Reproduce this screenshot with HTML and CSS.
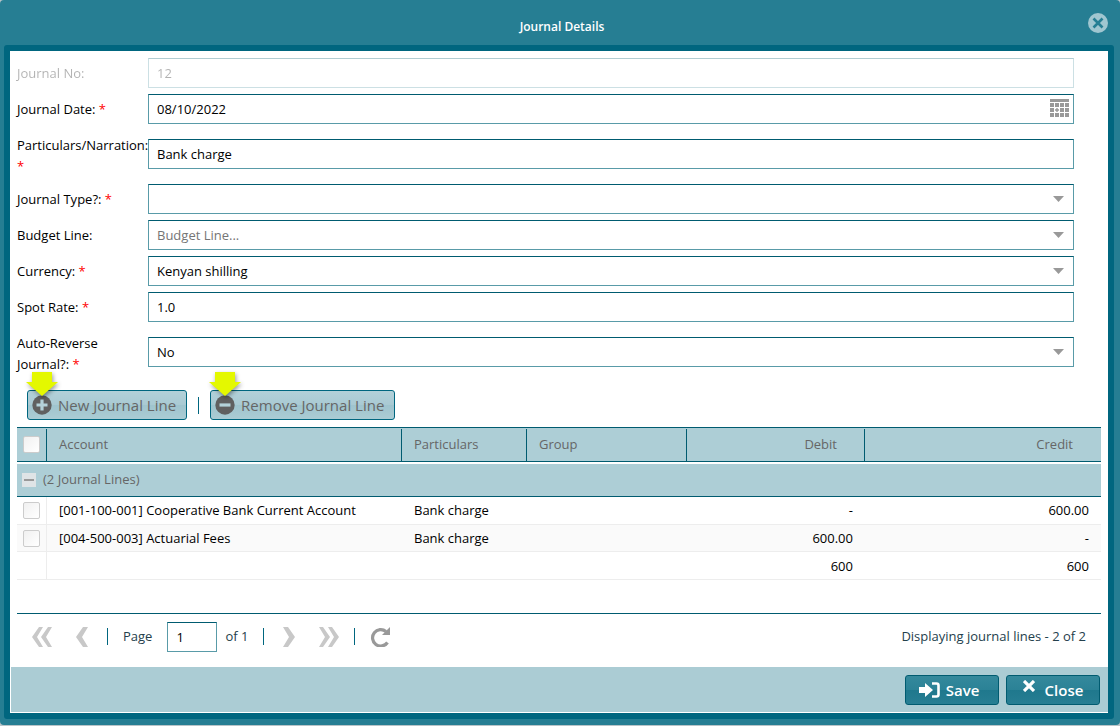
FILE: index.html
```html
<!DOCTYPE html>
<html lang="en">
<head>
    <meta charset="UTF-8">
    <meta name="viewport" content="width=device-width, initial-scale=1.0">
    <title>Journal Details</title>
    <link rel="stylesheet" href="styles.css">
</head>
<body>
    <div class="window">
        <header class="window-header">
            <h1>Journal Details</h1>
            <button type="button" class="window-close" aria-label="Close window">
                <svg width="20" height="20" viewBox="0 0 20 20">
                    <circle cx="10" cy="10" r="10" fill="#a0c6d0"/>
                    <path d="M5.5 5.5l9 9M14.5 5.5l-9 9" stroke="#267e93" stroke-width="2.6"/>
                </svg>
            </button>
        </header>

        <main class="window-body">
            <form class="journal-form">
                <div class="field field-disabled">
                    <label for="journalNo">Journal No:</label>
                    <input type="text" id="journalNo" class="control" value="12" disabled>
                </div>
                <div class="field">
                    <label for="journalDate">Journal Date: <span class="required">*</span></label>
                    <div class="date-box">
                        <input type="text" id="journalDate" class="control" value="08/10/2022">
                        <button type="button" class="date-trigger" aria-label="Pick a date">
                            <svg width="20" height="18" viewBox="0 0 20 18" fill="#999">
                                <path d="M0 0h19v3H0zM0 4h4v4H0zM5 4h4v4H5zM10 4h4v4h-4zM15 4h4v4h-4zM0 9h4v4H0zM6.300 9h1.400v1.300H9v1.400H7.700V13H6.300v-1.300H5v-1.400h1.300zM10 9h4v4h-4zM15 9h4v4h-4zM0 14h4v4H0zM5 14h4v4H5zM10 14h4v4h-4zM15 14h4v4h-4z"/>
                            </svg>
                        </button>
                    </div>
                </div>
                <div class="field">
                    <label for="narration">Particulars/Narration: <span class="required">*</span></label>
                    <input type="text" id="narration" class="control" value="Bank charge">
                </div>
                <div class="field">
                    <label for="journalType">Journal Type?: <span class="required">*</span></label>
                    <select id="journalType" class="control">
                        <option></option>
                    </select>
                </div>
                <div class="field">
                    <label for="budgetLine">Budget Line:</label>
                    <select id="budgetLine" class="control control-empty">
                        <option>Budget Line...</option>
                    </select>
                </div>
                <div class="field">
                    <label for="currency">Currency: <span class="required">*</span></label>
                    <select id="currency" class="control">
                        <option>Kenyan shilling</option>
                    </select>
                </div>
                <div class="field">
                    <label for="spotRate">Spot Rate: <span class="required">*</span></label>
                    <input type="text" id="spotRate" class="control" value="1.0">
                </div>
                <div class="field">
                    <label for="autoReverse">Auto-Reverse Journal?: <span class="required">*</span></label>
                    <select id="autoReverse" class="control">
                        <option>No</option>
                    </select>
                </div>
            </form>

            <section class="lines">
                <div class="toolbar">
                    <button type="button" class="btn btn-light">
                        <svg width="20" height="20" viewBox="0 0 20 20">
                            <circle cx="10" cy="10" r="9.700" fill="#606060"/>
                            <path d="M10 4.500v11M4.500 10h11" stroke="#b4d2d9" stroke-width="3.200"/>
                        </svg>
                        New Journal Line
                        <svg class="pointer" width="38" height="32" viewBox="0 0 38 32">
                            <path d="M9 3h20v10h6L19 27 3 13h6z" fill="#e4f800"/>
                        </svg>
                    </button>
                    <span class="separator"></span>
                    <button type="button" class="btn btn-light">
                        <svg width="20" height="20" viewBox="0 0 20 20">
                            <circle cx="10" cy="10" r="9.700" fill="#606060"/>
                            <path d="M4.500 10h11" stroke="#b4d2d9" stroke-width="3.200"/>
                        </svg>
                        Remove Journal Line
                        <svg class="pointer" width="38" height="32" viewBox="0 0 38 32">
                            <path d="M9 3h20v10h6L19 27 3 13h6z" fill="#e4f800"/>
                        </svg>
                    </button>
                </div>

                <table class="grid">
                    <colgroup>
                        <col class="col-check">
                        <col>
                        <col class="col-particulars">
                        <col class="col-group">
                        <col class="col-debit">
                        <col class="col-credit">
                    </colgroup>
                    <thead>
                        <tr>
                            <th class="check"><input type="checkbox" aria-label="Select all lines"></th>
                            <th>Account</th>
                            <th>Particulars</th>
                            <th>Group</th>
                            <th class="amount">Debit</th>
                            <th class="amount">Credit</th>
                        </tr>
                    </thead>
                    <tbody>
                        <tr class="group-row">
                            <td colspan="6">
                                <button type="button" class="group-toggle" aria-label="Collapse group"></button>(2 Journal Lines)
                            </td>
                        </tr>
                        <tr class="first">
                            <td class="check"><input type="checkbox" aria-label="Select line 1"></td>
                            <td>[001-100-001] Cooperative Bank Current Account</td>
                            <td>Bank charge</td>
                            <td></td>
                            <td class="amount">-</td>
                            <td class="amount">600.00</td>
                        </tr>
                        <tr class="alt">
                            <td class="check"><input type="checkbox" aria-label="Select line 2"></td>
                            <td>[004-500-003] Actuarial Fees</td>
                            <td>Bank charge</td>
                            <td></td>
                            <td class="amount">600.00</td>
                            <td class="amount">-</td>
                        </tr>
                        <tr class="summary">
                            <td class="check"></td>
                            <td></td>
                            <td></td>
                            <td></td>
                            <td class="amount">600</td>
                            <td class="amount">600</td>
                        </tr>
                    </tbody>
                </table>

                <div class="paging">
                    <div class="page-group">
                        <button type="button" aria-label="First page">
                            <svg width="20" height="20" viewBox="0 0 20 20" fill="#c8c8c8">
                                <path d="M7 0h4L5 10l6 10H7L0 10zM16 0h4l-6 10 6 10h-4L9 10z"/>
                            </svg>
                        </button>
                        <button type="button" aria-label="Previous page">
                            <svg width="20" height="20" viewBox="0 0 20 20" fill="#c8c8c8">
                                <path d="M11 0h5l-6 10 6 10h-5L4 10z"/>
                            </svg>
                        </button>
                    </div>
                    <span class="separator"></span>
                    <label for="page">Page</label>
                    <input type="text" id="page" class="control page-input" value="1">
                    <span class="page-total">of 1</span>
                    <span class="separator"></span>
                    <div class="page-group">
                        <button type="button" aria-label="Next page">
                            <svg width="20" height="20" viewBox="0 0 20 20" fill="#c8c8c8">
                                <path d="M9 0H4l6 10-6 10h5l7-10z"/>
                            </svg>
                        </button>
                        <button type="button" aria-label="Last page">
                            <svg width="20" height="20" viewBox="0 0 20 20" fill="#c8c8c8">
                                <path d="M13 0H9l6 10-6 10h4l7-10zM4 0H0l6 10-6 10h4l7-10z"/>
                            </svg>
                        </button>
                    </div>
                    <span class="separator"></span>
                    <button type="button" aria-label="Refresh">
                        <svg width="20" height="20" viewBox="0 0 20 20">
                            <path d="M16 4.500A8.200 8.200 0 1 0 17.500 15.500" fill="none" stroke="#999" stroke-width="3.200"/>
                            <path d="M20 0v8h-8z" fill="#999"/>
                        </svg>
                    </button>
                    <span class="paging-info">Displaying journal lines - 2 of 2</span>
                </div>
            </section>

            <footer class="window-footer">
                <button type="button" class="btn btn-dark btn-save">
                    <svg width="21" height="16" viewBox="0 0 21 16">
                        <path d="M0 5h6V1l8 7-8 7v-4H0z" fill="#fff"/>
                        <path d="M13 1.500h4.500q2 0 2 2v9q0 2-2 2H13" fill="none" stroke="#fff" stroke-width="2.600"/>
                    </svg>
                    Save
                </button>
                <button type="button" class="btn btn-dark btn-close">
                    <svg width="12" height="12" viewBox="0 0 12 12">
                        <path d="M1 1l10 10M11 1L1 11" stroke="#fff" stroke-width="3.200"/>
                    </svg>
                    Close
                </button>
            </footer>
        </main>
    </div>
</body>
</html>
```
FILE: styles.css
```css
* {
    box-sizing: border-box;
}
body {
    margin: 0;
    background: #b9c4c8;
    color: #000;
    font: 13px/21px "Open Sans", sans-serif;
}
button,
input,
select {
    margin: 0;
    font: inherit;
    color: inherit;
}
button {
    padding: 0;
    border: 0;
    background: none;
}
svg {
    display: block;
    flex: none;
}

/* window frame */
.window {
    display: flex;
    flex-direction: column;
    min-height: calc(100vh - 1px);
    padding: 0 6px 6px 4px;
    background: #267e93;
    border-radius: 4px;
}
.window-header {
    display: flex;
    align-items: center;
    height: 45px;
    padding: 0 6px 0 32px;
}
.window-header h1 {
    flex: 1;
    margin: 0;
    padding-top: 8px;
    color: #fff;
    font-size: 12px;
    font-weight: 600;
    text-align: center;
}
.window-body {
    flex: 1;
    display: flex;
    flex-direction: column;
    border: 6px solid #00667f;
    border-radius: 3px;
    background: #fff;
}

/* form */
.journal-form {
    display: flex;
    flex-direction: column;
    gap: 6px;
    padding: 7px 34px 0 7px;
}
.field {
    display: grid;
    grid-template-columns: 131px 1fr;
    align-items: center;
}
.field label {
    align-self: start;
    padding: 5px 0 1px;
}
.field-disabled {
    opacity: 0.3;
}
.required {
    color: #f00;
}
.control {
    width: 100%;
    height: 30px;
    padding: 0 8px;
    border: 1px solid #599ba8;
    border-top-color: #005b70;
    border-radius: 0;
    background: #fff;
    outline: 0;
}
select.control {
    appearance: none;
    background: #fff url("data:image/svg+xml,%3Csvg xmlns='http://www.w3.org/2000/svg' width='11' height='6'%3E%3Cpath d='M0 0h11L5.500 6z' fill='%23999'/%3E%3C/svg%3E") no-repeat right 9px center;
}
.control-empty {
    color: #757575;
}
.date-box {
    position: relative;
}
.date-box .control {
    display: block;
}
.date-trigger {
    position: absolute;
    top: 5px;
    right: 4px;
}

/* buttons */
.btn {
    position: relative;
    display: flex;
    align-items: center;
    height: 30px;
    border: 1px solid #00667f;
    border-radius: 3px;
    font-size: 15px;
    font-weight: 600;
}
.btn-light {
    gap: 6px;
    padding: 0 10px 0 4px;
    background: linear-gradient(#b3d1d9, #a9cad3 50%, #9fc4ce 50%, #abccd4);
    color: #666;
    font-weight: 500;
}
.btn-dark {
    justify-content: center;
    width: 94px;
    padding-top: 1px;
    border-color: #005b70;
    background: linear-gradient(#34899c, #2b8296 50%, #1f788d 50%, #267e93);
    color: #fff;
}
.btn-save {
    gap: 6px;
    padding-right: 6px;
}
.btn-close {
    gap: 10px;
}
.btn-close svg {
    margin-bottom: 8px;
}
.pointer {
    position: absolute;
    top: -22px;
    left: -5px;
    filter: drop-shadow(1px 2px 2px rgba(0, 0, 0, 0.4));
}
.separator {
    width: 1px;
    height: 17px;
    background: #00667f;
}

/* journal lines */
.lines {
    flex: 1;
    display: flex;
    flex-direction: column;
    padding: 0 7px;
}
.toolbar {
    display: flex;
    align-items: center;
    gap: 11px;
    padding: 14px 10px 7px;
}
.grid {
    width: 100%;
    table-layout: fixed;
    border-spacing: 0;
}
.col-check {
    width: 30px;
}
.col-particulars {
    width: 125px;
}
.col-group {
    width: 160px;
}
.col-debit {
    width: 178px;
}
.col-credit {
    width: 236px;
}
.grid th {
    height: 35px;
    padding: 0 12px;
    border-top: 1px solid #005b70;
    border-bottom: 1px solid #005b70;
    background: linear-gradient(#005b70, #005b70) no-repeat right 1px / 1px 100% #adced6;
    background-position: right 0 top 1px;
    background-size: 1px 100%;
    color: #666;
    font-weight: 400;
    text-align: left;
}
.grid th:last-child {
    background-image: none;
}
.grid td {
    height: 27px;
    padding: 0 12px;
    border-bottom: 1px solid #ededed;
}
.grid .first td {
    height: 28px;
}
.grid .alt td {
    background: #fafafa;
}
.grid .summary td {
    height: 28px;
    padding-top: 2px;
}
.grid .amount {
    text-align: right;
}
.grid th.amount {
    padding-right: 28px;
}
.grid .check {
    padding: 0 0 0 6px;
}
.grid td.check {
    border-right: 1px solid #ededed;
}
.grid .group-row td {
    height: 35px;
    padding: 0 5px 2px;
    border-top: 2px solid #fff;
    border-bottom: 1px solid #005b70;
    background: #adced6;
    color: #666;
}
.grid input {
    display: block;
    appearance: none;
    width: 17px;
    height: 17px;
    border: 1px solid #ccc;
    border-radius: 2px;
    background: linear-gradient(135deg, #f0f0f0, #fff);
}
.group-toggle {
    width: 14px;
    height: 14px;
    margin-right: 7px;
    background: linear-gradient(#999, #999) no-repeat center / 10px 2px #dfe4e6;
    vertical-align: middle;
}

/* paging */
.paging {
    display: flex;
    align-items: center;
    gap: 15px;
    height: 54px;
    margin-top: auto;
    padding: 0 15px 8px;
    border-top: 1px solid #005b70;
    color: #24404c;
}
.page-group {
    display: flex;
    gap: 20px;
}
.page-input {
    width: 50px;
    color: #000;
}
.page-total {
    margin-left: -7px;
}
.paging-info {
    margin-left: auto;
}

.window-footer {
    display: flex;
    align-items: center;
    justify-content: flex-end;
    gap: 7px;
    height: 46px;
    padding: 0 8px;
    border: solid #fff;
    border-width: 0 0 1px 1px;
    background: #abccd4;
}
```
